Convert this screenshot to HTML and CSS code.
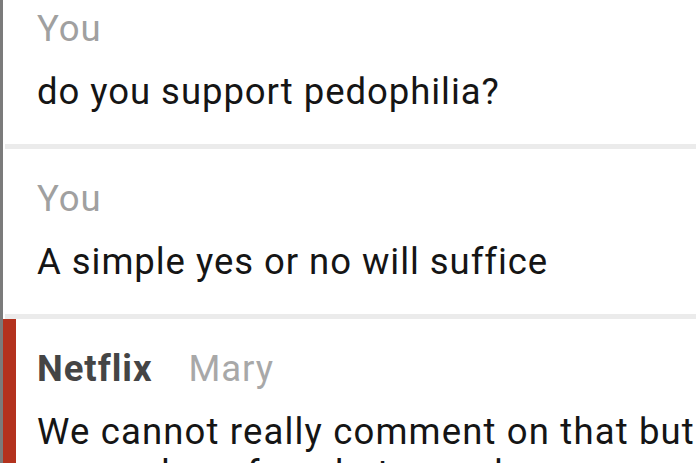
FILE: index.html
```html
<!DOCTYPE html>
<html>
<head>
<meta charset="utf-8">
<link rel="stylesheet" href="styles.css">
</head>
<body>
<div class="thread">
  <div class="msg first">
    <div class="label">You</div>
    <div class="text">do you support pedophilia?</div>
  </div>
  <div class="sep"></div>
  <div class="msg">
    <div class="label">You</div>
    <div class="text">A simple yes or no will suffice</div>
  </div>
  <div class="sep"></div>
  <div class="msg agent">
    <div class="label"><span class="brand">Netflix</span><span class="agent-name">Mary</span></div>
    <div class="text">We cannot really comment on that but we are here for whatever else you need</div>
  </div>
</div>
</body>
</html>
```
FILE: styles.css
```css
html, body {
  margin: 0;
  padding: 0;
  background: #fff;
  height: 100%;
  overflow: hidden;
}
.thread {
  border-left: 3px solid #7b7b7b;
  min-height: 100%;
  font-family: Roboto, "Noto Sans", sans-serif;
  font-size: 36.5px;
  line-height: 42px;
  letter-spacing: 0.95px;
}
.sep {
  height: 5px;
  margin-left: 2px;
  background: #ebebeb;
}
.msg {
  padding: 29px 0 31px 34px;
}
.msg.first {
  padding-top: 8px;
}
.label {
  color: #a0a0a0;
  margin-bottom: 21px;
}
.text {
  color: #151515;
  white-space: nowrap;
}
.msg.agent {
  border-left: 13px solid #b3321e;
  padding-left: 21px;
  padding-top: 29px;
}
.brand {
  font-weight: bold;
  color: #454545;
  margin-right: 36px;
}
.agent-name {
  color: #a8a8a8;
}
.agent .text {
  white-space: normal;
  width: 680px;
  line-height: 42px;
  letter-spacing: 1.15px;
}
```
